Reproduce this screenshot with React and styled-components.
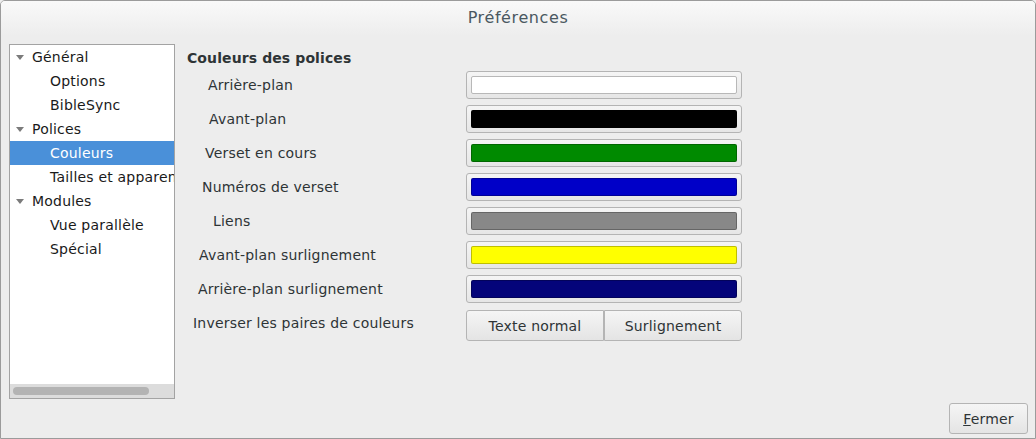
import React from "react";
import styled, { createGlobalStyle } from "styled-components";

const Global = createGlobalStyle`
  html, body { margin: 0; padding: 0; background: #ededed; }
  body { font-family: "DejaVu Sans", "Liberation Sans", sans-serif; font-size: 14px; letter-spacing: 0.2px; }
  * { box-sizing: border-box; }
`;

const Window = styled.div`
  width: 1036px;
  height: 439px;
  border: 1px solid #9b9b9b;
  border-radius: 5px 5px 0 0;
  background: #ededed;
  display: flex;
  flex-direction: column;
  overflow: hidden;
`;

const TitleBar = styled.div`
  height: 35px;
  flex: none;
  display: flex;
  align-items: center;
  justify-content: center;
  background: linear-gradient(#f9f9f9, #ededed);
  color: #4a5861;
  font-size: 16px;
  letter-spacing: 0.6px;
  padding-bottom: 2px;
`;

const Body = styled.div`
  flex: 1;
  display: flex;
  padding: 8px 8px 0 8px;
  min-height: 0;
`;

const Tree = styled.div`
  width: 166px;
  height: 355px;
  border: 1px solid #a3a3a3;
  background: #fff;
  display: flex;
  flex-direction: column;
  flex: none;
`;

const TreeRows = styled.div`
  flex: 1;
  overflow: hidden;
`;

const Row = styled.div`
  height: 24px;
  display: flex;
  align-items: center;
  padding-left: ${p => (p.$child ? 40 : 6)}px;
  padding-bottom: 1px;
  background: ${p => (p.$selected ? "#4a90d9" : "transparent")};
  color: ${p => (p.$selected ? "#fff" : "#1a1a1a")};
  white-space: nowrap;
  overflow: hidden;
`;

const Arrow = styled.span`
  width: 0;
  height: 0;
  border-left: 4.5px solid transparent;
  border-right: 4.5px solid transparent;
  border-top: 5px solid #7b7b7b;
  margin-right: 8px;
  margin-top: 1px;
`;

const ScrollTrough = styled.div`
  height: 14px;
  background: #dcdcdc;
  display: flex;
  align-items: center;
  padding-left: 3px;
  flex: none;
`;

const ScrollThumb = styled.div`
  width: 136px;
  height: 8px;
  border-radius: 4px;
  background: #b3b3b3;
`;

const Panel = styled.div`
  flex: 1;
  padding-left: 12px;
  padding-top: 5px;
  color: #2e3436;
`;

const Heading = styled.div`
  font-weight: bold;
  letter-spacing: 0.1px;
  height: 18px;
  line-height: 18px;
  margin-bottom: 4px;
`;

const Grid = styled.div`
  display: grid;
  grid-template-columns: 279px 276px;
  grid-auto-rows: 28px;
  row-gap: 6px;
`;

const Label = styled.div`
  display: flex;
  align-items: center;
  padding-left: ${p => p.$indent}px;
  padding-bottom: 1px;
  white-space: nowrap;
`;

const ColorButton = styled.div`
  border: 1px solid #b4b4b4;
  border-radius: 3px;
  background: linear-gradient(#f5f5f5, #e6e6e6);
  padding: 4px;
  display: flex;
`;

const Swatch = styled.div`
  flex: 1;
  border-radius: 2px;
  border: 1px solid ${p => (p.$color === "#ffffff" ? "#b8b8b8" : "rgba(0,0,0,0.25)")};
  background: ${p => p.$color};
`;

const ButtonPair = styled.div`
  display: flex;
  height: 31px;
  margin-top: 1px;
`;

const Button = styled.button`
  font-family: inherit;
  font-size: 14px;
  letter-spacing: 0.2px;
  color: #2e3436;
  border: 1px solid #b4b4b4;
  border-radius: ${p => p.$radius || "3px"};
  background: linear-gradient(#f5f5f5, #e4e4e4);
  width: ${p => p.$w}px;
  height: ${p => p.$h || 31}px;
  padding: 0;
  display: flex;
  align-items: center;
  justify-content: center;
`;

const Footer = styled.div`
  height: 41px;
  flex: none;
  display: flex;
  justify-content: flex-end;
  align-items: flex-start;
  padding: 6px 7px 0 0;
`;

const rows = [
  { label: "Arrière-plan", indent: 21, color: "#ffffff" },
  { label: "Avant-plan", indent: 22, color: "#000000" },
  { label: "Verset en cours", indent: 18, color: "#008a00" },
  { label: "Numéros de verset", indent: 15, color: "#0000c8" },
  { label: "Liens", indent: 26, color: "#888888" },
  { label: "Avant-plan surlignement", indent: 12, color: "#ffff00" },
  { label: "Arrière-plan surlignement", indent: 11, color: "#04047a" },
];

const tree = [
  { t: "Général", parent: true },
  { t: "Options" },
  { t: "BibleSync" },
  { t: "Polices", parent: true },
  { t: "Couleurs", selected: true },
  { t: "Tailles et apparence" },
  { t: "Modules", parent: true },
  { t: "Vue parallèle" },
  { t: "Spécial" },
];

export default function App() {
  return (
    <>
      <Global />
      <Window>
        <TitleBar>Préférences</TitleBar>
        <Body>
          <Tree>
            <TreeRows>
              {tree.map(r => (
                <Row key={r.t} $child={!r.parent} $selected={r.selected}>
                  {r.parent && <Arrow />}
                  {r.t}
                </Row>
              ))}
            </TreeRows>
            <ScrollTrough>
              <ScrollThumb />
            </ScrollTrough>
          </Tree>
          <Panel>
            <Heading>Couleurs des polices</Heading>
            <Grid>
              {rows.map(r => (
                <React.Fragment key={r.label}>
                  <Label $indent={r.indent}>{r.label}</Label>
                  <ColorButton>
                    <Swatch $color={r.color} />
                  </ColorButton>
                </React.Fragment>
              ))}
              <Label $indent={6}>Inverser les paires de couleurs</Label>
              <ButtonPair>
                <Button $w={138} $radius="3px 0 0 3px">Texte normal</Button>
                <Button $w={138} $radius="0 3px 3px 0">Surlignement</Button>
              </ButtonPair>
            </Grid>
          </Panel>
        </Body>
        <Footer>
          <Button $w={79} $h={31}>
            <span><u>F</u>ermer</span>
          </Button>
        </Footer>
      </Window>
    </>
  );
}
